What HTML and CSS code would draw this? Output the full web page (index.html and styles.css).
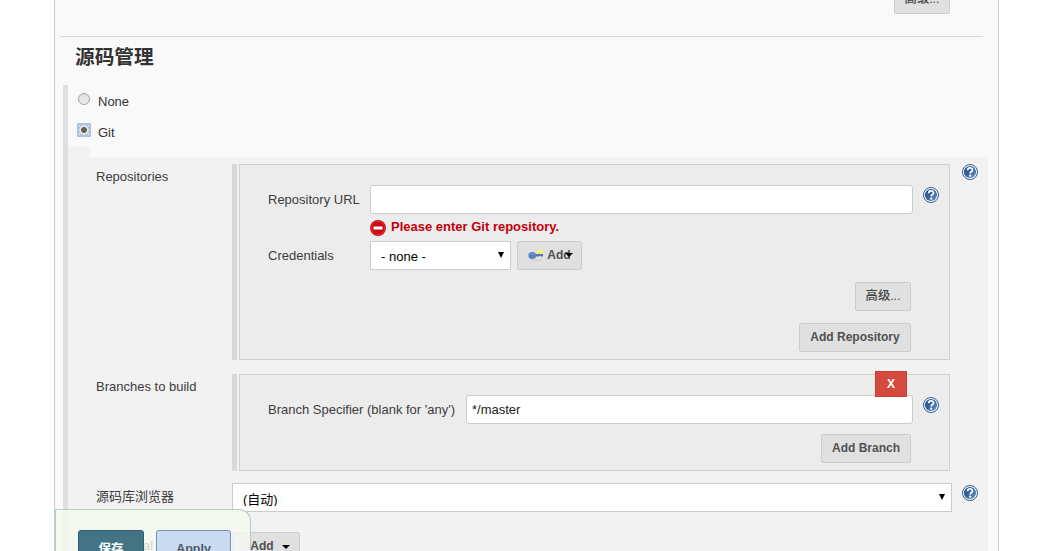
FILE: index.html
```html
<!DOCTYPE html>
<html lang="zh-CN">
<head>
<meta charset="utf-8">
<title>源码管理</title>
<link rel="stylesheet" href="styles.css">
</head>
<body>
<svg class="defs" aria-hidden="true">
  <defs>
    <linearGradient id="blue" x1="0" y1="0" x2="1" y2="1">
      <stop offset="0" stop-color="#26508c"/><stop offset=".45" stop-color="#345f9b"/><stop offset="1" stop-color="#6d9dcc"/>
    </linearGradient>
    <symbol id="help" viewBox="0 0 16 16">
      <circle cx="8" cy="8" r="7.5" fill="#fff" stroke="#315b95"/>
      <circle cx="8" cy="8" r="6.1" fill="url(#blue)"/>
      <path d="M5.7 6.2C5.7 3.2 10.5 3.2 10.5 5.9C10.5 7.7 8.2 7.5 8.2 9.5" fill="none" stroke="#fff" stroke-width="1.8"/>
      <circle cx="8.2" cy="11.7" r="1.15" fill="#fff"/>
    </symbol>
  </defs>
</svg>
<main class="panel">
  <div class="previous"><button class="btn advanced">高级...</button></div>
  <h1 class="title">源码管理</h1>
  <section class="scm">
    <label class="choice"><span class="radio"></span>None</label>
    <label class="choice choice-git"><span class="radio radio-on"></span>Git</label>
    <div class="notch"></div>
    <div class="settings">
      <div class="row repositories">
        <div class="name">Repositories</div>
        <div class="group">
          <div class="box">
            <div class="field">
              <span class="label">Repository URL</span><div class="input"></div>
              <svg class="help"><use href="#help"/></svg>
            </div>
            <div class="error">
              <svg class="stop" viewBox="0 0 16 16"><circle cx="8" cy="8" r="8" fill="#cc0b12"/><circle cx="8" cy="8" r="6.7" fill="none" stroke="#e6494d" stroke-width=".6"/><rect x="3.5" y="6.4" width="9" height="3.2" rx=".5" fill="#fff"/></svg>
              Please enter Git repository.
            </div>
            <div class="field credentials">
              <span class="label">Credentials</span>
              <div class="select"><span>- none -</span><i class="arrow"></i></div>
              <button class="btn key-add">
                <svg class="key" viewBox="0 0 16 14"><path d="M9 2h6v4H9z" fill="#e9e97c"/><path d="M10 2h4v2h-4z" fill="#fafa58"/><path d="M3 12h11" stroke="#d2d2d2" stroke-width="1.5"/><path d="M6 6h9v2.500h-2l-1-.8-1 .8H7z" fill="#4b79b5"/><ellipse cx="4.2" cy="7.5" rx="3.8" ry="3.6" fill="#5482bb"/><path d="M2 6.200h4.500" stroke="#7fa3cf" stroke-width=".8"/></svg>
                <span>Add</span><i class="caret"></i>
              </button>
            </div>
            <div class="actions"><button class="btn advanced">高级...</button></div>
            <div class="actions"><button class="btn add-repository">Add Repository</button></div>
          </div>
        </div>
        <svg class="help"><use href="#help"/></svg>
      </div>
      <div class="row branches">
        <div class="name">Branches to build</div>
        <div class="group">
          <div class="box">
            <button class="delete">X</button>
            <div class="field">
              <span class="label label-wide">Branch Specifier (blank for 'any')</span><div class="input">*/master</div>
              <svg class="help"><use href="#help"/></svg>
            </div>
            <div class="actions"><button class="btn add-branch">Add Branch</button></div>
          </div>
        </div>
      </div>
      <div class="row browser">
        <div class="name">源码库浏览器</div>
        <div class="select select-wide"><span class="clipped">(自动)</span><i class="arrow"></i></div>
        <svg class="help"><use href="#help"/></svg>
      </div>
      <div class="row behaviours">
        <div class="name">Additional</div>
        <button class="btn add-behaviour"><span>Add</span><i class="caret"></i></button>
      </div>
    </div>
  </section>
</main>
<footer class="savebar"><button class="save">保存</button><button class="apply">Apply</button></footer>
</body>
</html>
```
FILE: styles.css
```css
* { box-sizing: border-box; }
body {
  margin: 0;
  height: 551px;
  overflow: hidden;
  background: #fff;
  color: #3c3c3c;
  font: 13px/16px "Liberation Sans", "Noto Sans CJK SC", sans-serif;
}
button { font: inherit; padding: 0; margin: 0; }
.defs { position: absolute; width: 0; height: 0; }
.panel {
  width: 945px;
  height: 551px;
  margin-left: 54px;
  padding: 0 10px 0 5px;
  overflow: hidden;
  background: #f9f9f9;
  border: solid #ccc;
  border-width: 0 1px;
}
.previous {
  display: flex;
  align-items: flex-end;
  justify-content: flex-end;
  height: 37px;
  width: 923px;
  padding: 0 33px 22px 0;
  border-bottom: 1px solid #d9d9d9;
}
.btn {
  display: flex;
  flex: none;
  align-items: center;
  justify-content: center;
  height: 29px;
  padding-bottom: 1px;
  color: #505050;
  background: #e0e0e0;
  border: 1px solid #ccc;
  border-radius: 2px;
  font-weight: bold;
  font-size: 12px;
}
.advanced { width: 56px; color: #444; font-weight: 500; font-size: 12.3px; }
.title {
  margin: 0;
  padding: 8px 0 0 15px;
  height: 48px;
  color: #333;
  font-size: 19.7px;
  line-height: 24px;
}
.scm {
  width: 925px;
  height: 466px;
  margin-left: 3px;
  border-left: 5px solid #dfdfdf;
}
.choice {
  display: flex;
  align-items: center;
  height: 32px;
  padding: 2px 0 0 10px;
  color: #333;
}
.choice-git { height: 30px; }
.radio {
  width: 12px;
  height: 12px;
  margin: -6px 8px 0 0;
  border: 1px solid #a2a2a2;
  border-radius: 50%;
  background: linear-gradient(#e0e0e0, #ececec);
}
.radio-on {
  position: relative;
  z-index: 0;
  background: radial-gradient(circle, #666055 0 2.5px, #e8e8e8 3.5px);
}
.radio-on::before {
  content: "";
  position: absolute;
  inset: -2px;
  z-index: -1;
  border: 2px solid #a7c2ec;
}
.notch { width: 22px; height: 10px; background: #f2f2f2; }
.settings {
  height: 394px;
  width: 920px;
  padding: 7px 0 0 28px;
  background: #f2f2f2;
}
.row { display: flex; align-items: flex-start; }
.name { flex: none; width: 136px; padding-top: 5px; }
.help { flex: none; width: 16px; height: 16px; }
.row > .help { margin-left: 12px; }
.group {
  flex: none;
  width: 718px;
  padding-left: 2px;
  border-left: 5px solid #d9d9d9;
}
.box {
  height: 100%;
  padding: 20px 10px 0 28px;
  background: #ececec;
  border: 1px solid #d0d0d0;
}
.repositories, .repositories .group { height: 196px; }
.branches .group { height: 97px; }
.branches { margin-top: 14px; }
.field { display: flex; align-items: center; height: 29px; }
.label { flex: none; width: 102px; }
.label-wide { width: 198px; }
.input {
  flex: 1;
  height: 29px;
  padding: 6px 5px 4px;
  color: #222;
  background: #fff;
  border: 1px solid #ccc;
  border-radius: 3px;
}
.field .help { margin: -9px 0 0 10px; }
.error {
  display: flex;
  height: 27px;
  padding: 5px 0 0 102px;
  gap: 5px;
  color: #c4000a;
  font-weight: bold;
}
.stop { width: 16px; height: 16px; margin-top: 1px; }
.select {
  display: flex;
  flex: none;
  align-items: center;
  justify-content: space-between;
  width: 141px;
  height: 29px;
  padding: 2px 6px 0 10px;
  color: #000;
  background: #fff;
  border: 1px solid #ccc;
}
.arrow {
  margin-top: -3px;
  border: solid transparent;
  border-width: 6px 3px 0;
  border-top-color: #000;
}
.key-add { position: relative; width: 65px; margin-left: 6px; }
.key { width: 16px; height: 14px; margin-right: 3px; }
.caret { border: solid transparent; border-width: 4px 4px 0; border-top-color: #000; }
.key-add .caret { position: absolute; right: 8px; top: 11px; }
.actions { display: flex; justify-content: flex-end; margin-top: 12px; padding-right: 28px; }
.add-repository { width: 112px; }
.add-branch { width: 90px; }
.branches .actions { margin-top: 10px; }
.branches .box { position: relative; }
.delete {
  position: absolute;
  top: -4px;
  right: 42px;
  width: 32px;
  height: 26px;
  color: #fff;
  background: #d54a3d;
  border: 1px solid #c54437;
  font-weight: bold;
  font-size: 12px;
}
.browser { margin-top: 12px; }
.browser .name { padding-top: 6px; }
.select-wide { width: 720px; }
.clipped { height: 14px; overflow: hidden; line-height: 16px; }
.row.browser > .help { margin: 2px 0 0 10px; }
.behaviours { margin-top: 20px; }
.behaviours .name { padding-top: 6px; }
.add-behaviour { width: 68px; gap: 8px; padding-left: 8px; }
.add-behaviour .caret { margin-top: 1px; }
.savebar {
  position: absolute;
  left: 55px;
  top: 509px;
  display: flex;
  gap: 12px;
  width: 196px;
  height: 42px;
  padding: 20px 0 0 22px;
  overflow: hidden;
  background: rgba(245, 249, 239, .8);
  border: solid #b3cdbf;
  border-width: 1px 1px 0;
  border-radius: 0 12px 0 0;
}
.save, .apply {
  flex: none;
  height: 38px;
  border-radius: 3px;
  font-weight: bold;
  font-size: 12.5px;
}
.save { width: 66px; color: #fff; background: #437486; border: 1px solid #315d6d; }
.apply { width: 75px; color: #4d5966; background: #cadbf0; border: 1px solid #6d92bf; }
```
